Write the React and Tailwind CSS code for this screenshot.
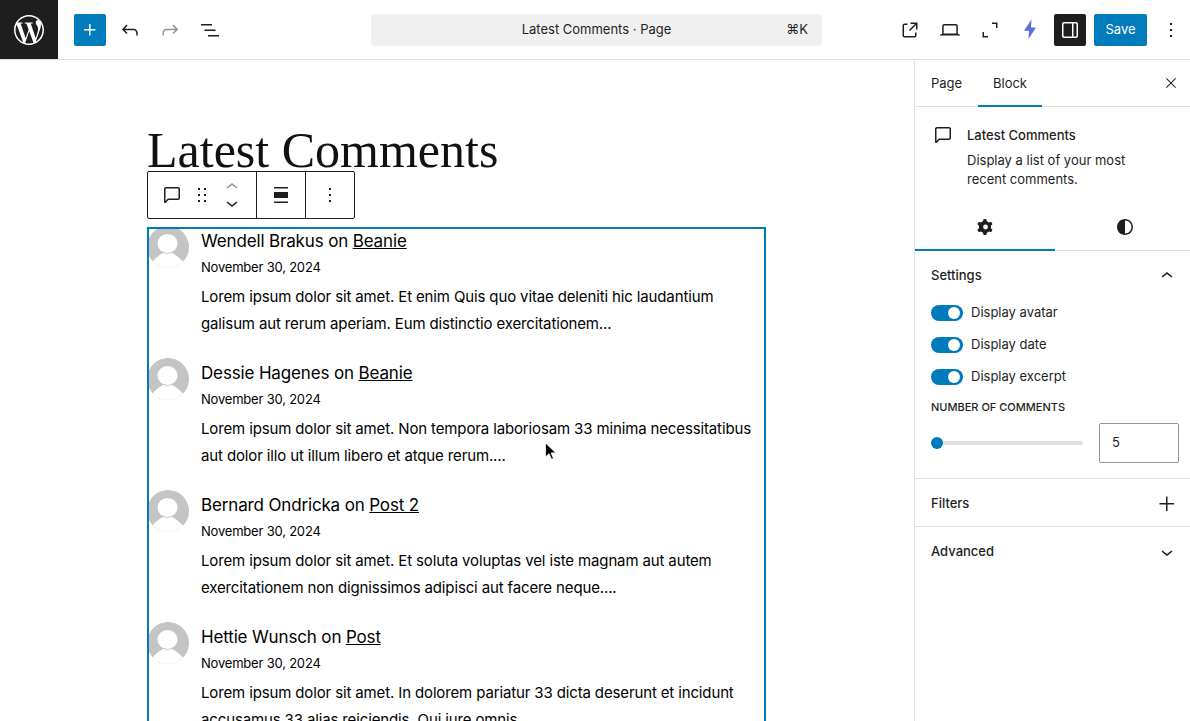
const P = {
  wp: "M12.158,12.786L9.46,20.625c.806,.237,1.657,.366,2.54,.366c1.047,0,2.051-.181,2.986-.51c-.024-.038-.046-.079-.065-.124L12.158,12.786z M3.009,12c0,3.559,2.068,6.634,5.067,8.092L3.788,8.341C3.289,9.459,3.009,10.696,3.009,12z M18.069,11.546c0-1.112-.399-1.881-.741-2.48c-.456-.741-.883-1.368-.883-2.109c0-.826,.627-1.596,1.51-1.596c.04,0,.078,.005,.116,.007C16.472,3.904,14.34,3.009,12,3.009c-3.141,0-5.904,1.612-7.512,4.052c.211,.007,.41,.011,.579,.011c.94,0,2.396-.114,2.396-.114C7.947,6.93,8.004,7.642,7.52,7.699c0,0-.487,.057-1.029,.085l3.274,9.739l1.968-5.901l-1.401-3.838c-.484-.028-.943-.085-.943-.085c-.485-.029-.428-.769,.057-.742c0,0,1.484,.114,2.368,.114c.94,0,2.397-.114,2.397-.114c.485-.028,.543,.683,.058,.742c0,0-.488,.057-1.029,.085l3.25,9.667l.897-2.996C17.841,13.284,18.069,12.316,18.069,11.546z M19.889,7.686c.039,.286,.06,.593,.06,.924c0,.912-.171,1.938-.684,3.22l-2.746,7.94c2.673-1.558,4.47-4.454,4.47-7.771C20.991,10.436,20.591,8.967,19.889,7.686z M12,22C6.486,22,2,17.514,2,12C2,6.486,6.486,2,12,2c5.514,0,10,4.486,10,10C22,17.514,17.514,22,12,22z",
  plus: "M11 12.5V17.5H12.5V12.5H17.5V11H12.5V6H11V11H6V12.5H11Z",
  undo: "M18.3 11.7c-.6-.6-1.4-.9-2.3-.9H6.7l2.9-3.3-1.1-1-4.5 5L8.5 16l1-1-2.7-2.7H16c.5 0 .9.2 1.3.5 1 1 1 3.4 1 4.5v.3h1.5v-.2c0-1.5 0-4.3-1.5-5.7z",
  redo: "M15.6 6.5l-1.1 1 2.9 3.3H8c-.9 0-1.7.3-2.3.9-1.4 1.5-1.4 4.2-1.4 5.6v.2h1.5v-.3c0-1.1 0-3.5 1-4.5.3-.3.7-.5 1.3-.5h9.2L14.5 15l1.1 1.1 4.6-4.6-4.6-5z",
  list: "M3 6h11v1.5H3V6Zm3.5 5.5h11V13h-11v-1.5ZM21 17H10v1.5h11V17Z",
  external: "M19.5 4.5h-7V6h4.44l-5.97 5.97 1.06 1.06L18 7.06v4.44h1.5v-7Zm-13 1a2 2 0 0 0-2 2v10a2 2 0 0 0 2 2h10a2 2 0 0 0 2-2v-3H17v3a.5.5 0 0 1-.5.5h-10a.5.5 0 0 1-.5-.5v-10a.5.5 0 0 1 .5-.5h3V5.5h-3Z",
  laptop: "M20.5 16h-.7V8c0-1.1-.9-2-2-2H6.2c-1.1 0-2 .9-2 2v8h-.7c-.8 0-1.5.7-1.5 1.5h20c0-.8-.7-1.5-1.5-1.5zM5.7 8c0-.3.2-.5.5-.5h11.6c.3 0 .5.2.5.5v7.6H5.7V8z",
  full: "M14 4.5h5.5V10H18V6h-4V4.5ZM10 19.5H4.5V14H6v4h4v1.5Z",
  sidebar: "M18 4H6c-1.1 0-2 .9-2 2v12c0 1.1.9 2 2 2h12c1.1 0 2-.9 2-2V6c0-1.1-.9-2-2-2zm-4 14.5H6c-.3 0-.5-.2-.5-.5V6c0-.3.2-.5.5-.5h8v13zm4.5-.5c0 .3-.2.5-.5.5h-2.5v-13H18c.3 0 .5.2.5.5v12z",
  more: "M13 19h-2v-2h2v2zm0-6h-2v-2h2v2zm0-6h-2V5h2v2z",
  close: "m13.06 12 6.47-6.47-1.06-1.06L12 10.94 5.53 4.47 4.47 5.53 10.94 12l-6.47 6.47 1.06 1.06L12 13.06l6.47 6.47 1.06-1.06L13.06 12Z",
  comment: "M18 4H6c-1.1 0-2 .9-2 2v12.9c0 .6.5 1.1 1.1 1.1.3 0 .5-.1.8-.3L8.5 17H18c1.1 0 2-.9 2-2V6c0-1.1-.9-2-2-2zm.5 11c0 .3-.2.5-.5.5H7.9l-2.4 2.4V6c0-.3.2-.5.5-.5h12c.3 0 .5.2.5.5v9z",
  drag: "M8 7h2V5H8v2zm0 6h2v-2H8v2zm0 6h2v-2H8v2zm6-14v2h2V5h-2zm0 8h2v-2h-2v2zm0 6h2v-2h-2v2z",
  up: "M6.5 12.4L12 8l5.5 4.4-.9 1.2L12 10l-4.5 3.6-1-1.2z",
  down: "M17.5 11.6L12 16l-5.5-4.4.9-1.2L12 14l4.5-3.6 1 1.2z",
  align: "M19 5.5H5V4h14v1.5ZM19 20H5v-1.5h14V20ZM5 9h14v6H5V9Z",
  cog: "M10.289 4.836A1 1 0 0 1 11.275 4h1.306a1 1 0 0 1 .987.836l.244 1.466c.787.26 1.503.679 2.108 1.218l1.393-.522a1 1 0 0 1 1.216.437l.653 1.13a1 1 0 0 1-.23 1.273l-1.148.944a6.025 6.025 0 0 1 0 2.435l1.149.946a1 1 0 0 1 .23 1.272l-.653 1.13a1 1 0 0 1-1.216.437l-1.394-.522c-.605.54-1.32.958-2.108 1.218l-.244 1.466a1 1 0 0 1-.987.836h-1.306a1 1 0 0 1-.986-.836l-.244-1.466a5.995 5.995 0 0 1-2.108-1.218l-1.394.522a1 1 0 0 1-1.217-.436l-.653-1.131a1 1 0 0 1 .23-1.272l1.149-.946a6.026 6.026 0 0 1 0-2.435l-1.148-.944a1 1 0 0 1-.23-1.272l.653-1.131a1 1 0 0 1 1.217-.437l1.393.522a5.994 5.994 0 0 1 2.108-1.218l.244-1.466ZM14.929 12a2.4 2.4 0 1 1-4.800 0 2.400 2.400 0 0 1 4.800 0Z",
  half: "M12 4c4.4 0 8 3.6 8 8s-3.600 8-8 8-8-3.600-8-8 3.600-8 8-8zm0 1.500v13c3.600 0 6.500-2.900 6.500-6.500S15.600 5.500 12 5.500z",
  add: "M11 12.5V19h1.500v-6.500H19V11h-6.500V4.500H11V11H4.500v1.500H11Z",
};

function Icon({ d, size = 24, className = "", evenodd = false }) {
  return (
    <svg width={size} height={size} viewBox="0 0 24 24" className={className} fill="currentColor">
      <path d={d} fillRule={evenodd ? "evenodd" : "nonzero"} clipRule={evenodd ? "evenodd" : "nonzero"} />
    </svg>
  );
}

function IconBtn({ d, className = "" }) {
  return (
    <div className={"w-10 h-8 shrink-0 flex items-center justify-center " + className}>
      <Icon d={d} />
    </div>
  );
}

function Avatar() {
  return (
    <svg width="42" height="42" viewBox="0 0 42 42" className="shrink-0 block">
      <defs>
        <clipPath id="av"><circle cx="21" cy="21" r="21" /></clipPath>
      </defs>
      <circle cx="21" cy="21" r="21" fill="#c4c4c4" />
      <g clipPath="url(#av)" fill="#fff">
        <ellipse cx="20.5" cy="17.5" rx="10" ry="9.5" />
        <path d="M0 42 5 37c2-4 7-8 11-10 3 1 6 1 9 0 4 2 9 6 12 10l5 5z" />
      </g>
    </svg>
  );
}

const comments = [
  ["Wendell Brakus", "Beanie", "Lorem ipsum dolor sit amet. Et enim Quis quo vitae deleniti hic laudantium galisum aut rerum aperiam. Eum distinctio exercitationem..."],
  ["Dessie Hagenes", "Beanie", "Lorem ipsum dolor sit amet. Non tempora laboriosam 33 minima necessitatibus aut dolor illo ut illum libero et atque rerum...."],
  ["Bernard Ondricka", "Post 2", "Lorem ipsum dolor sit amet. Et soluta voluptas vel iste magnam aut autem exercitationem non dignissimos adipisci aut facere neque...."],
  ["Hettie Wunsch", "Post", "Lorem ipsum dolor sit amet. In dolorem pariatur 33 dicta deserunt et incidunt accusamus 33 alias reiciendis. Qui iure omnis"],
];

function Comment({ c }) {
  return (
    <div className="flex h-[132px]">
      <Avatar />
      <div className="ml-3 flex-1">
        <div className="text-[17px] leading-[27px] mt-[2px] tracking-[-0.15px] text-black">
          {c[0]} on <span className="underline">{c[1]}</span>
        </div>
        <div className="text-[13px] leading-[20px] mt-[2px] tracking-[-0.2px] text-black">November 30, 2024</div>
        <div className="text-[15px] leading-[27px] mt-[6px] tracking-[-0.135px] text-black">{c[2]}</div>
      </div>
    </div>
  );
}

function Toggle({ label }) {
  return (
    <div className="flex items-center h-4 mb-4 gap-2">
      <div className="w-8 h-4 rounded-full bg-[#007cba] relative -mt-[1px]">
        <div className="absolute right-[3px] top-[2px] w-3 h-3 rounded-full bg-white" />
      </div>
      <span className="text-[13px] text-[#1e1e1e]">{label}</span>
    </div>
  );
}

function PanelRow({ title, d, border = true, pad = "pt-px" }) {
  return (
    <div className={"h-12 flex items-center justify-between pl-4 pr-[11px] " + pad + " " + (border ? "border-b border-[#e0e0e0]" : "")}>
      <span className="text-[13px] font-medium text-[#1e1e1e]">{title}</span>
      <Icon d={d} />
    </div>
  );
}

export default function App() {
  return (
    <div className="h-[721px] w-[1190px] overflow-hidden bg-white flex flex-col font-['Inter','Liberation_Sans',sans-serif] text-[#1e1e1e]">
      <header className="h-[60px] shrink-0 border-b border-[#e0e0e0] flex items-center overflow-hidden">
        <div className="w-[58px] h-[60px] shrink-0 bg-[#1e1e1e] text-white flex items-center justify-center -mb-px">
          <Icon d={P.wp} size={36} className="-ml-px" />
        </div>
        <div className="ml-4 w-8 h-8 shrink-0 bg-[#007cba] rounded-[2px] text-white flex items-center justify-center">
          <Icon d={P.plus} />
        </div>
        <IconBtn d={P.undo} className="ml-1" />
        <IconBtn d={P.redo} className="text-[#949494]" />
        <IconBtn d={P.list} />
        <div className="ml-[141px] w-[451px] h-8 shrink-0 bg-[#f0f0f0] rounded-[4px] flex items-center justify-center relative text-[13px] text-[#1e1e1e]">
          Latest Comments · Page
          <span className="absolute right-[14px] text-[#1e1e1e]">⌘K</span>
        </div>
        <IconBtn d={P.external} className="ml-[68px]" />
        <IconBtn d={P.laptop} />
        <IconBtn d={P.full} />
        <div className="w-10 h-8 shrink-0 flex items-center justify-center">
          <svg width="24" height="24" viewBox="0 0 24 24" fill="#5a6fd8">
            <path d="M13.500 1.500 6 12.800h5L10.500 21 18 9.500h-5z" />
          </svg>
        </div>
        <div className="ml-1 w-8 h-8 shrink-0 bg-[#1e1e1e] rounded-[2px] text-white flex items-center justify-center">
          <Icon d={P.sidebar} />
        </div>
        <div className="ml-2 w-[53px] h-8 shrink-0 bg-[#007cba] rounded-[2px] text-white text-[13px] flex items-center justify-center">Save</div>
        <IconBtn d={P.more} className="ml-[4px]" />
      </header>

      <div className="flex-1 flex min-h-0">
        <main className="flex-1 min-w-0 overflow-hidden relative">
          <div className="w-[620px] ml-[147px]">
            <h1 className="font-['Liberation_Serif',serif] text-[50px] leading-[60px] mt-[60px] text-[#111]">Latest Comments</h1>
            <div className="mt-[47px] relative w-[619px] h-[600px] overflow-hidden pr-[13px]">
              <div className="-mt-[1px]">
                {comments.map((c) => (
                  <Comment key={c[0]} c={c} />
                ))}
              </div>
              <div className="absolute inset-0 border-2 border-[#007cba] pointer-events-none" />
            </div>
          </div>

          <div className="absolute left-[147px] top-[111px] h-12 w-[208px] bg-white border border-[#1e1e1e] rounded-[2px] flex items-stretch text-[#1e1e1e]">
            <div className="w-[109px] flex items-center pl-[12px] border-r border-[#1e1e1e]">
              <Icon d={P.comment} />
              <Icon d={P.drag} className="ml-[6px]" />
              <div className="ml-[6px] w-6 flex flex-col items-center">
                <Icon d={P.up} className="text-[#949494] -mb-[8px]" />
                <Icon d={P.down} />
              </div>
            </div>
            <div className="w-[49px] flex items-center justify-center border-r border-[#1e1e1e]">
              <Icon d={P.align} />
            </div>
            <div className="flex-1 flex items-center justify-center">
              <Icon d={P.more} />
            </div>
          </div>

          <svg className="absolute left-[544px] top-[382px]" width="13" height="19" viewBox="0 0 13 19">
            <path d="M1.500 1v14l3.500-3.300 2.500 5.600 2-.9-2.400-5.500h4.800z" fill="#000" stroke="#fff" strokeWidth="0.800" />
          </svg>
        </main>

        <aside className="w-[276px] shrink-0 border-l border-[#e0e0e0] flex flex-col overflow-hidden">
          <div className="h-[47px] shrink-0 border-b border-[#e0e0e0] flex items-stretch relative text-[13px]">
            <div className="w-[63px] flex items-center justify-center pt-px">Page</div>
            <div className="w-[64px] flex items-center justify-center pt-[3px] border-b-2 border-[#007cba] -mb-px">Block</div>
            <Icon d={P.close} size={16} className="absolute right-[11px] top-[15px]" />
          </div>

          <div className="flex pl-4 pr-4 pt-4 h-[97px] shrink-0">
            <Icon d={P.comment} className="shrink-0" />
            <div className="ml-3 text-[13px]">
              <div className="font-medium leading-[24px]">Latest Comments</div>
              <div className="leading-[19px] mt-[4px] w-[170px]">Display a list of your most recent comments.</div>
            </div>
          </div>

          <div className="h-[47px] shrink-0 border-b border-[#e0e0e0] flex">
            <div className="w-[140px] shrink-0 flex items-center justify-center border-b-2 border-[#007cba] -mb-px">
              <Icon d={P.cog} evenodd />
            </div>
            <div className="w-[140px] shrink-0 flex items-center justify-center">
              <Icon d={P.half} evenodd />
            </div>
          </div>

          <div className="border-b border-[#e0e0e0] h-[228px] shrink-0">
            <div className="h-[49px] flex items-center justify-between pl-4 pr-[11px]">
              <span className="text-[13px] font-medium">Settings</span>
              <Icon d={P.up} />
            </div>
            <div className="pl-4 pt-[5px]">
              <Toggle label="Display avatar" />
              <Toggle label="Display date" />
              <Toggle label="Display excerpt" />
              <div className="text-[11px] font-medium uppercase leading-4 -mt-[2px]">Number of comments</div>
              <div className="flex items-center mt-[8px]">
                <div className="w-[152px] h-1 bg-[#e0e0e0] rounded-full relative">
                  <div className="absolute left-0 -top-1 w-3 h-3 rounded-full bg-[#007cba]" />
                </div>
                <div className="ml-4 w-20 h-10 border border-[#949494] rounded-[2px] flex items-center pl-3 text-[13px]">5</div>
              </div>
            </div>
          </div>

          <PanelRow title="Filters" d={P.add} pad="pt-[2px]" />
          <PanelRow title="Advanced" d={P.down} border={false} />
        </aside>
      </div>
    </div>
  );
}
